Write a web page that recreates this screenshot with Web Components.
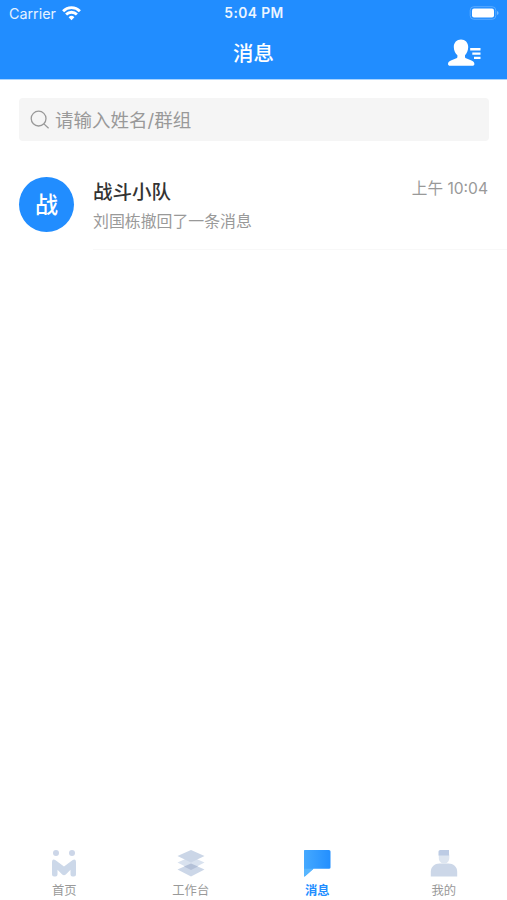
<!DOCTYPE html>
<html lang="zh-CN">
<head>
<meta charset="utf-8">
<title>消息</title>
<style>
html,body{margin:0;height:100%;background:#fff}
body{font-family:Inter,"Noto Sans CJK SC",sans-serif;overflow:hidden}
</style>
</head>
<body>
<message-app></message-app>
<script>
function define(name, html){
  const t=document.createElement('template');
  t.innerHTML=html;
  customElements.define(name,class extends HTMLElement{
    constructor(){super();this.attachShadow({mode:'open'}).appendChild(t.content.cloneNode(true));}
  });
}

define('status-bar',`<style>
:host{display:grid;grid-template-columns:1fr auto 1fr;align-items:start;height:27px;padding:0 8px 0 9px;color:#fff;box-sizing:border-box}
.left{display:flex;align-items:center;gap:6px;font-size:14.3px;line-height:27px;color:#e6f2ff}
.time{font-size:13.8px;font-weight:600;line-height:27px;letter-spacing:.4px;color:#ecf5ff}
.right{display:flex;justify-content:flex-end;padding-top:6px}
svg{display:block}
</style>
<div class="left"><span>Carrier</span><svg width="19" height="15" viewBox="0 0 19 15" fill="none" stroke="#fff" stroke-width="2.8"><path d="M1.1 5.2a11.8 11.8 0 0 1 16.8 0M4.1 8.5a7.6 7.6 0 0 1 10.8 0"/><path d="M9.5 14.3 6.6 11.3a4.1 4.1 0 0 1 5.8 0z" fill="#fff" stroke="none"/></svg></div>
<div class="time">5:04 PM</div>
<div class="right"><svg width="30" height="14" viewBox="0 0 30 14"><rect x="1.2" y=".7" width="25.6" height="12.6" rx="3.6" fill="none" stroke="#5aabff" stroke-width="1"/><rect x="3" y="2.5" width="22" height="9" rx="2" fill="#fff"/><path d="M28 5v4q1.600-.6 1.600-2T28 5z" fill="#74b9ff"/></svg></div>`);

define('title-bar',`<style>
:host{display:grid;grid-template-columns:1fr auto 1fr;align-items:center;height:52px;padding:0 26px;color:#fff}
.t{grid-column:2;font-size:20.4px;font-weight:500;line-height:50px;padding-top:2px}
svg{justify-self:end;display:block}
</style>
<span class="t"><slot></slot></span>
<svg width="34" height="28" viewBox="0 0 34 28" fill="#fff"><path d="M14 .6c4.200 0 7.200 3 7.200 7.400 0 3.500-1.500 6.500-3.200 8.200v1.600c0 1 .6 1.400 1.600 1.800l4.900 1.800c2.100.8 2.900 2 2.900 3.600 0 1.200-.8 1.800-2.100 1.800H3.100C1.800 26.800 1 26.200 1 25c0-1.600.8-2.800 2.900-3.600l4.900-1.800c1-.4 1.600-.8 1.600-1.800v-1.600C8.300 14.500 6.800 11.500 6.800 8 6.800 3.600 9.800.6 14 .6z"/><path d="M23.200 9.100h10.300v2.300H23.200zM25.300 13.400h8.200v2.300h-8.200zM27 17.800h6.500v2.300H27z"/></svg>`);

define('search-box',`<style>
:host{display:flex;align-items:center;gap:5px;height:43px;margin:19px 18.5px 0;padding:2px 0 0 11.5px;background:#f5f5f5;border-radius:4px;color:#999;font-size:18.5px;line-height:41px;box-sizing:border-box}
svg{flex:none;margin-bottom:1px}
</style>
<svg width="20" height="20" viewBox="0 0 20 20" fill="none" stroke="#999" stroke-width="1.3"><circle cx="8.600" cy="8.600" r="7.400"/><path d="m13.900 13.900 4.700 4.400"/></svg>
<span><slot></slot></span>`);

define('chat-row',`<style>
:host{display:flex;gap:19px;padding-left:19px;margin-top:24px;height:85px;box-sizing:border-box}
.avatar{flex:none;width:55px;height:55px;margin-top:12px;border-radius:50%;background:#218dff;color:#fff;display:grid;place-items:center;font-size:23px;font-weight:500;line-height:25px;padding-top:2px;box-sizing:border-box}
.body{flex:1;border-bottom:1px solid #f8f8f8;display:grid;grid-template-columns:1fr auto;grid-template-rows:28px 28px;padding:13px 19px 0 0}
.name{font-size:19.5px;font-weight:500;line-height:28px;color:#333}
.time{font-size:15.6px;line-height:22px;color:#999}
.last{font-size:15.9px;line-height:31px;color:#999;grid-column:1/3}
</style>
<div class="avatar"><slot name="avatar"></slot></div>
<div class="body"><div class="name"><slot name="name"></slot></div><div class="time"><slot name="time"></slot></div><div class="last"><slot></slot></div></div>`);

define('tab-item',`<style>
:host{flex:1;display:flex;flex-direction:column;align-items:center;color:#999;font-size:12.3px;line-height:18px}
:host([active]){color:#218dff;font-weight:700}
.i{height:35px}
::slotted(svg){display:block}
</style><div class="i"><slot name="icon"></slot></div><span><slot></slot></span>`);

define('tab-bar',`<style>:host{display:flex;height:51px;margin-top:auto;padding-left:1px}</style><slot></slot>`);

define('message-app',`<style>
:host{display:flex;flex-direction:column;height:100vh;background:#fff}
header{background:#218dff;height:79px;flex:none;border-bottom:1px solid #a9d4ff}
search-box{margin-top:18px}
</style>
<header><status-bar></status-bar><title-bar>消息</title-bar></header>
<search-box>请输入姓名/群组</search-box>
<chat-row><span slot="avatar">战</span><span slot="name">战斗小队</span><span slot="time">上午 10:04</span>刘国栋撤回了一条消息</chat-row>
<tab-bar>
<tab-item><svg slot="icon" width="28" height="30" viewBox="0 0 28 30"><g fill="#ccd6e8"><circle cx="6" cy="4" r="3"/><circle cx="22" cy="4" r="3"/></g><path d="M2 13.500Q2 9 5.600 11.200L14 17.500 22.400 11.200Q26 9 26 13.500V25.500Q26 27.500 24 27.500H22.500Q20.500 27.500 20.500 25.500V20.800L15.800 25.600Q14 27 12.200 25.600L7.500 20.800V25.500Q7.500 27.500 5.500 27.500H4Q2 27.500 2 25.500z" fill="#ccd8e9"/></svg>首页</tab-item>
<tab-item><svg slot="icon" width="28" height="30" viewBox="0 0 28 30"><path d="m14 14.500 13.500 6L14 27.500l-13.500-7z" fill="#ccd7e8"/><path d="m14 7.500 13.500 6L14 20.500l-13.500-7z" fill="#d9e2ef"/><path d="m14 14.500 7 3.100-7 3.400-7-3.400z" fill="#b4c1d8"/><path d="m14 1 13.500 6L14 13.500.5 7z" fill="#cbd6e7"/></svg>工作台</tab-item>
<tab-item active><svg slot="icon" width="28" height="30" viewBox="0 0 28 30"><defs><linearGradient id="g" x1="0" y1="0" x2="1" y2="0"><stop stop-color="#45a9ff"/><stop offset="1" stop-color="#238fff"/></linearGradient></defs><path d="M1.500 1H26q1.500 0 1.500 1.500v16q0 1.300-1.500 1.300H10.500L2 27.200Q1 27.800 1 26.500v-25z" fill="url(#g)"/><path d="M1 19.800V26.500q0 1.300 1 .7l8.500-7.400z" fill="#58b6ff"/></svg>消息</tab-item>
<tab-item><svg slot="icon" width="28" height="30" viewBox="0 0 28 30"><path d="M.8 27.500v-4.700c0-5.200 4-8.300 8.700-8.300h9c4.700 0 8.700 3.100 8.700 8.300v4.700z" fill="#ccd7e8"/><path d="M8.800 5.500h10.500V9c0 3.400-2.300 5.600-5.200 5.600S8.800 12.400 8.800 9z" fill="#dde5f0"/><path d="M8.500 6.500V2.800Q8.500 1 10.300 1H19v5.500z" fill="#bccbe4"/></svg>我的</tab-item>
</tab-bar>`);
</script>
</body>
</html>
